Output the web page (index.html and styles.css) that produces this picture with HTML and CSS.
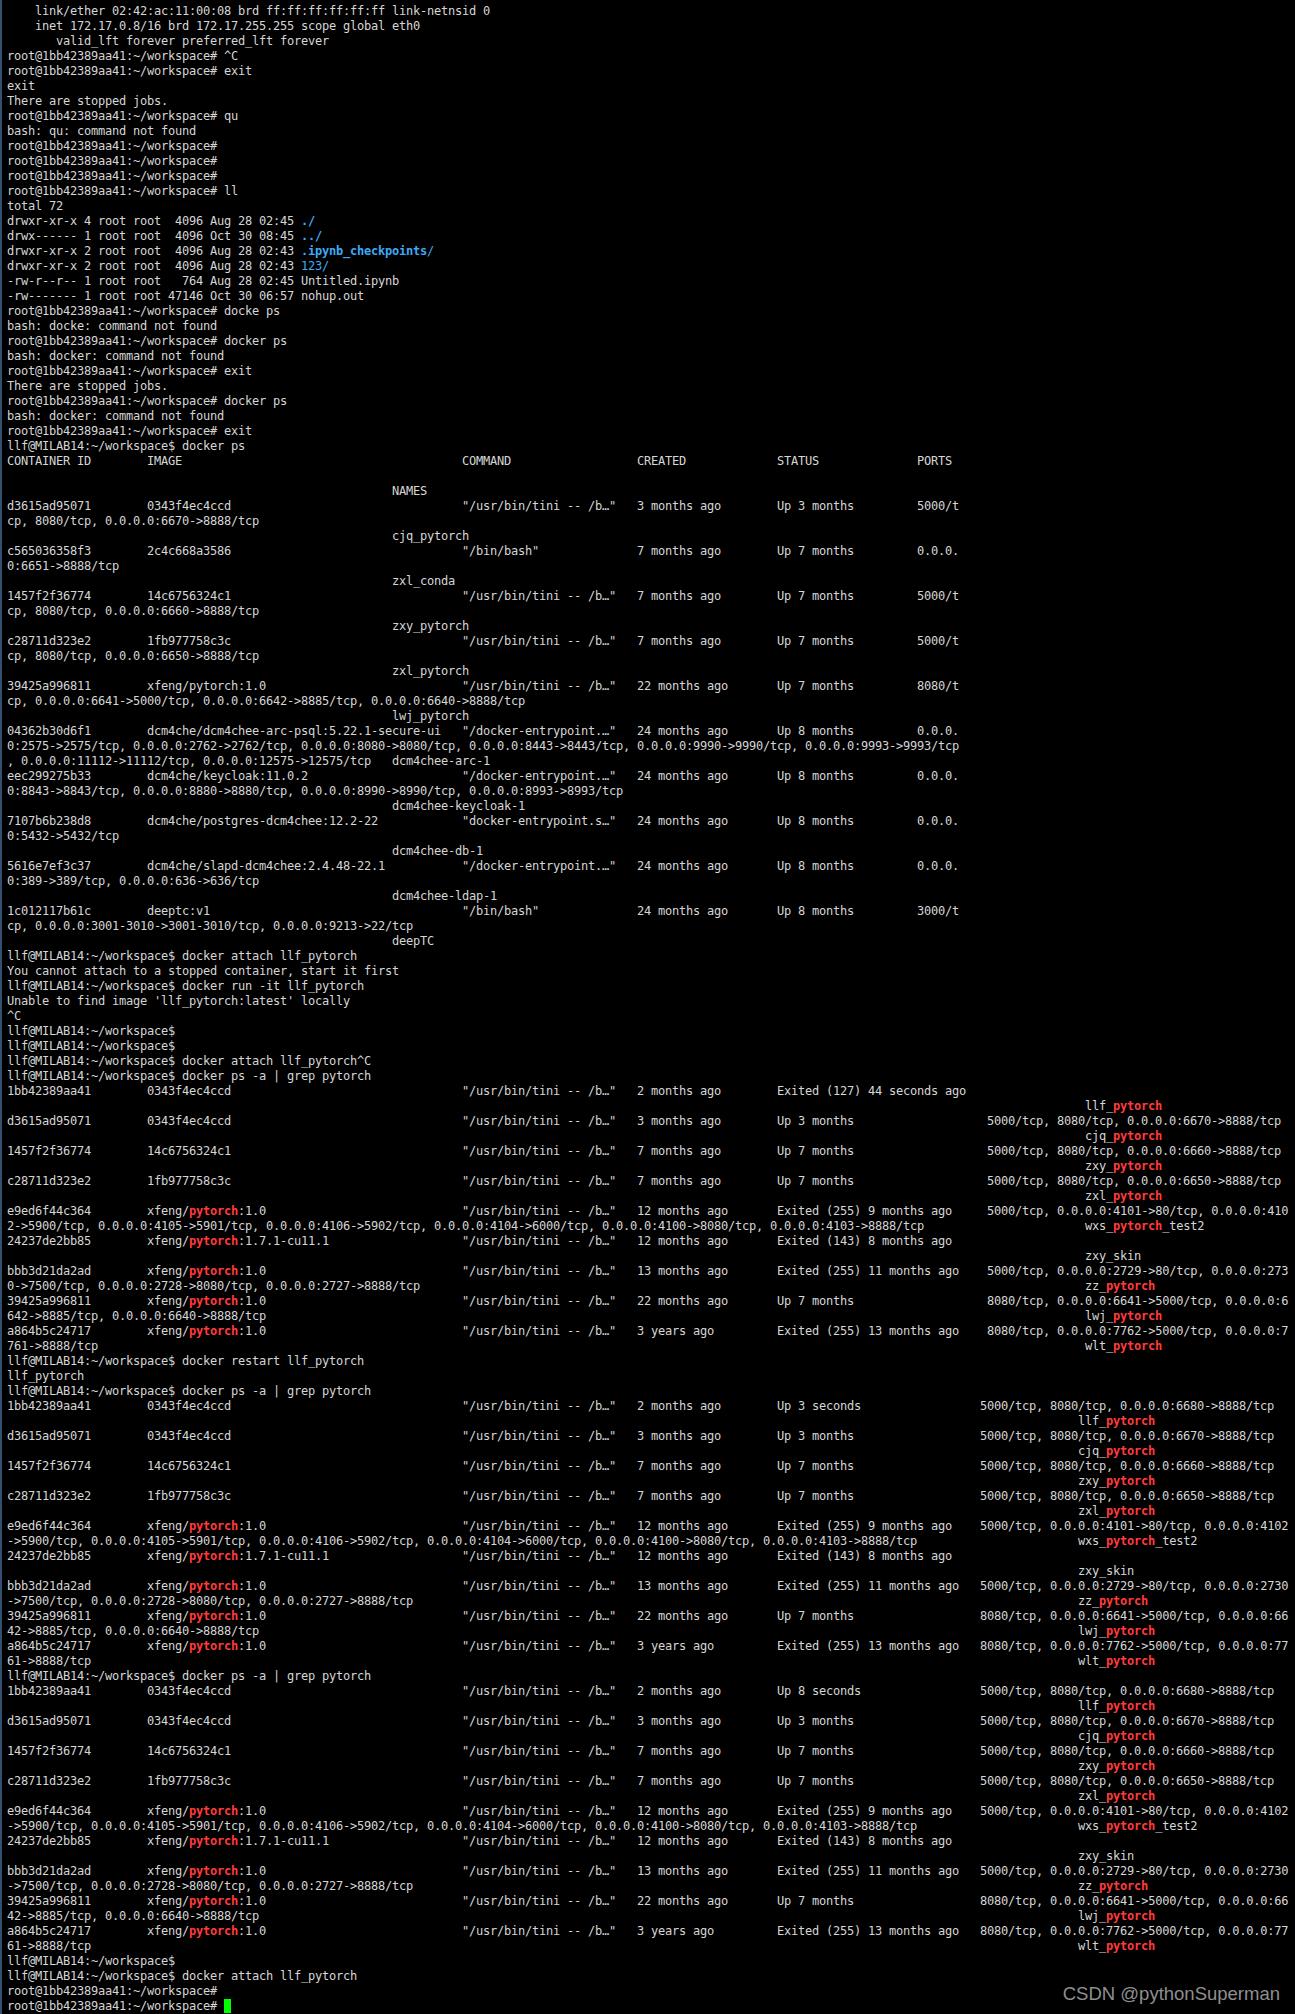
FILE: index.html
```html
<!DOCTYPE html>
<html lang="en">
<head>
<meta charset="utf-8">
<title>Terminal</title>
<link rel="stylesheet" href="styles.css">
</head>
<body>
<main class="terminal">
<pre class="screen">    link/ether 02:42:ac:11:00:08 brd ff:ff:ff:ff:ff:ff link-netnsid 0
    inet 172.17.0.8/16 brd 172.17.255.255 scope global eth0
       valid_lft forever preferred_lft forever
root@1bb42389aa41:~/workspace# ^C
root@1bb42389aa41:~/workspace# exit
exit
There are stopped jobs.
root@1bb42389aa41:~/workspace# qu
bash: qu: command not found
root@1bb42389aa41:~/workspace#
root@1bb42389aa41:~/workspace#
root@1bb42389aa41:~/workspace#
root@1bb42389aa41:~/workspace# ll
total 72
drwxr-xr-x 4 root root  4096 Aug 28 02:45 <b class="dir">./</b>
drwx------ 1 root root  4096 Oct 30 08:45 <b class="dir">../</b>
drwxr-xr-x 2 root root  4096 Aug 28 02:43 <b class="dir">.ipynb_checkpoints</b><span class="dir">/</span>
drwxr-xr-x 2 root root  4096 Aug 28 02:43 <span class="dir">123/</span>
-rw-r--r-- 1 root root   764 Aug 28 02:45 Untitled.ipynb
-rw------- 1 root root 47146 Oct 30 06:57 nohup.out
root@1bb42389aa41:~/workspace# docke ps
bash: docke: command not found
root@1bb42389aa41:~/workspace# docker ps
bash: docker: command not found
root@1bb42389aa41:~/workspace# exit
There are stopped jobs.
root@1bb42389aa41:~/workspace# docker ps
bash: docker: command not found
root@1bb42389aa41:~/workspace# exit
llf@MILAB14:~/workspace$ docker ps
CONTAINER ID        IMAGE                                        COMMAND                  CREATED             STATUS              PORTS

                                                       NAMES
d3615ad95071        0343f4ec4ccd                                 "/usr/bin/tini -- /b…"   3 months ago        Up 3 months         5000/t
cp, 8080/tcp, 0.0.0.0:6670->8888/tcp
                                                       cjq_pytorch
c565036358f3        2c4c668a3586                                 "/bin/bash"              7 months ago        Up 7 months         0.0.0.
0:6651->8888/tcp
                                                       zxl_conda
1457f2f36774        14c6756324c1                                 "/usr/bin/tini -- /b…"   7 months ago        Up 7 months         5000/t
cp, 8080/tcp, 0.0.0.0:6660->8888/tcp
                                                       zxy_pytorch
c28711d323e2        1fb977758c3c                                 "/usr/bin/tini -- /b…"   7 months ago        Up 7 months         5000/t
cp, 8080/tcp, 0.0.0.0:6650->8888/tcp
                                                       zxl_pytorch
39425a996811        xfeng/pytorch:1.0                            "/usr/bin/tini -- /b…"   22 months ago       Up 7 months         8080/t
cp, 0.0.0.0:6641->5000/tcp, 0.0.0.0:6642->8885/tcp, 0.0.0.0:6640->8888/tcp
                                                       lwj_pytorch
04362b30d6f1        dcm4che/dcm4chee-arc-psql:5.22.1-secure-ui   "/docker-entrypoint.…"   24 months ago       Up 8 months         0.0.0.
0:2575->2575/tcp, 0.0.0.0:2762->2762/tcp, 0.0.0.0:8080->8080/tcp, 0.0.0.0:8443->8443/tcp, 0.0.0.0:9990->9990/tcp, 0.0.0.0:9993->9993/tcp
, 0.0.0.0:11112->11112/tcp, 0.0.0.0:12575->12575/tcp   dcm4chee-arc-1
eec299275b33        dcm4che/keycloak:11.0.2                      "/docker-entrypoint.…"   24 months ago       Up 8 months         0.0.0.
0:8843->8843/tcp, 0.0.0.0:8880->8880/tcp, 0.0.0.0:8990->8990/tcp, 0.0.0.0:8993->8993/tcp
                                                       dcm4chee-keycloak-1
7107b6b238d8        dcm4che/postgres-dcm4chee:12.2-22            "docker-entrypoint.s…"   24 months ago       Up 8 months         0.0.0.
0:5432->5432/tcp
                                                       dcm4chee-db-1
5616e7ef3c37        dcm4che/slapd-dcm4chee:2.4.48-22.1           "/docker-entrypoint.…"   24 months ago       Up 8 months         0.0.0.
0:389->389/tcp, 0.0.0.0:636->636/tcp
                                                       dcm4chee-ldap-1
1c012117b61c        deeptc:v1                                    "/bin/bash"              24 months ago       Up 8 months         3000/t
cp, 0.0.0.0:3001-3010->3001-3010/tcp, 0.0.0.0:9213->22/tcp
                                                       deepTC
llf@MILAB14:~/workspace$ docker attach llf_pytorch
You cannot attach to a stopped container, start it first
llf@MILAB14:~/workspace$ docker run -it llf_pytorch
Unable to find image 'llf_pytorch:latest' locally
^C
llf@MILAB14:~/workspace$
llf@MILAB14:~/workspace$
llf@MILAB14:~/workspace$ docker attach llf_pytorch^C
llf@MILAB14:~/workspace$ docker ps -a | grep pytorch
1bb42389aa41        0343f4ec4ccd                                 "/usr/bin/tini -- /b…"   2 months ago        Exited (127) 44 seconds ago
                                                                                                                                                          llf_<b class="hit">pytorch</b>
d3615ad95071        0343f4ec4ccd                                 "/usr/bin/tini -- /b…"   3 months ago        Up 3 months                   5000/tcp, 8080/tcp, 0.0.0.0:6670->8888/tcp
                                                                                                                                                          cjq_<b class="hit">pytorch</b>
1457f2f36774        14c6756324c1                                 "/usr/bin/tini -- /b…"   7 months ago        Up 7 months                   5000/tcp, 8080/tcp, 0.0.0.0:6660->8888/tcp
                                                                                                                                                          zxy_<b class="hit">pytorch</b>
c28711d323e2        1fb977758c3c                                 "/usr/bin/tini -- /b…"   7 months ago        Up 7 months                   5000/tcp, 8080/tcp, 0.0.0.0:6650->8888/tcp
                                                                                                                                                          zxl_<b class="hit">pytorch</b>
e9ed6f44c364        xfeng/<b class="hit">pytorch</b>:1.0                            "/usr/bin/tini -- /b…"   12 months ago       Exited (255) 9 months ago     5000/tcp, 0.0.0.0:4101->80/tcp, 0.0.0.0:410
2->5900/tcp, 0.0.0.0:4105->5901/tcp, 0.0.0.0:4106->5902/tcp, 0.0.0.0:4104->6000/tcp, 0.0.0.0:4100->8080/tcp, 0.0.0.0:4103->8888/tcp                       wxs_<b class="hit">pytorch</b>_test2
24237de2bb85        xfeng/<b class="hit">pytorch</b>:1.7.1-cu11.1                   "/usr/bin/tini -- /b…"   12 months ago       Exited (143) 8 months ago
                                                                                                                                                          zxy_skin
bbb3d21da2ad        xfeng/<b class="hit">pytorch</b>:1.0                            "/usr/bin/tini -- /b…"   13 months ago       Exited (255) 11 months ago    5000/tcp, 0.0.0.0:2729->80/tcp, 0.0.0.0:273
0->7500/tcp, 0.0.0.0:2728->8080/tcp, 0.0.0.0:2727->8888/tcp                                                                                               zz_<b class="hit">pytorch</b>
39425a996811        xfeng/<b class="hit">pytorch</b>:1.0                            "/usr/bin/tini -- /b…"   22 months ago       Up 7 months                   8080/tcp, 0.0.0.0:6641->5000/tcp, 0.0.0.0:6
642->8885/tcp, 0.0.0.0:6640->8888/tcp                                                                                                                     lwj_<b class="hit">pytorch</b>
a864b5c24717        xfeng/<b class="hit">pytorch</b>:1.0                            "/usr/bin/tini -- /b…"   3 years ago         Exited (255) 13 months ago    8080/tcp, 0.0.0.0:7762->5000/tcp, 0.0.0.0:7
761->8888/tcp                                                                                                                                             wlt_<b class="hit">pytorch</b>
llf@MILAB14:~/workspace$ docker restart llf_pytorch
llf_pytorch
llf@MILAB14:~/workspace$ docker ps -a | grep pytorch
1bb42389aa41        0343f4ec4ccd                                 "/usr/bin/tini -- /b…"   2 months ago        Up 3 seconds                 5000/tcp, 8080/tcp, 0.0.0.0:6680->8888/tcp
                                                                                                                                                         llf_<b class="hit">pytorch</b>
d3615ad95071        0343f4ec4ccd                                 "/usr/bin/tini -- /b…"   3 months ago        Up 3 months                  5000/tcp, 8080/tcp, 0.0.0.0:6670->8888/tcp
                                                                                                                                                         cjq_<b class="hit">pytorch</b>
1457f2f36774        14c6756324c1                                 "/usr/bin/tini -- /b…"   7 months ago        Up 7 months                  5000/tcp, 8080/tcp, 0.0.0.0:6660->8888/tcp
                                                                                                                                                         zxy_<b class="hit">pytorch</b>
c28711d323e2        1fb977758c3c                                 "/usr/bin/tini -- /b…"   7 months ago        Up 7 months                  5000/tcp, 8080/tcp, 0.0.0.0:6650->8888/tcp
                                                                                                                                                         zxl_<b class="hit">pytorch</b>
e9ed6f44c364        xfeng/<b class="hit">pytorch</b>:1.0                            "/usr/bin/tini -- /b…"   12 months ago       Exited (255) 9 months ago    5000/tcp, 0.0.0.0:4101->80/tcp, 0.0.0.0:4102
->5900/tcp, 0.0.0.0:4105->5901/tcp, 0.0.0.0:4106->5902/tcp, 0.0.0.0:4104->6000/tcp, 0.0.0.0:4100->8080/tcp, 0.0.0.0:4103->8888/tcp                       wxs_<b class="hit">pytorch</b>_test2
24237de2bb85        xfeng/<b class="hit">pytorch</b>:1.7.1-cu11.1                   "/usr/bin/tini -- /b…"   12 months ago       Exited (143) 8 months ago
                                                                                                                                                         zxy_skin
bbb3d21da2ad        xfeng/<b class="hit">pytorch</b>:1.0                            "/usr/bin/tini -- /b…"   13 months ago       Exited (255) 11 months ago   5000/tcp, 0.0.0.0:2729->80/tcp, 0.0.0.0:2730
->7500/tcp, 0.0.0.0:2728->8080/tcp, 0.0.0.0:2727->8888/tcp                                                                                               zz_<b class="hit">pytorch</b>
39425a996811        xfeng/<b class="hit">pytorch</b>:1.0                            "/usr/bin/tini -- /b…"   22 months ago       Up 7 months                  8080/tcp, 0.0.0.0:6641->5000/tcp, 0.0.0.0:66
42->8885/tcp, 0.0.0.0:6640->8888/tcp                                                                                                                     lwj_<b class="hit">pytorch</b>
a864b5c24717        xfeng/<b class="hit">pytorch</b>:1.0                            "/usr/bin/tini -- /b…"   3 years ago         Exited (255) 13 months ago   8080/tcp, 0.0.0.0:7762->5000/tcp, 0.0.0.0:77
61->8888/tcp                                                                                                                                             wlt_<b class="hit">pytorch</b>
llf@MILAB14:~/workspace$ docker ps -a | grep pytorch
1bb42389aa41        0343f4ec4ccd                                 "/usr/bin/tini -- /b…"   2 months ago        Up 8 seconds                 5000/tcp, 8080/tcp, 0.0.0.0:6680->8888/tcp
                                                                                                                                                         llf_<b class="hit">pytorch</b>
d3615ad95071        0343f4ec4ccd                                 "/usr/bin/tini -- /b…"   3 months ago        Up 3 months                  5000/tcp, 8080/tcp, 0.0.0.0:6670->8888/tcp
                                                                                                                                                         cjq_<b class="hit">pytorch</b>
1457f2f36774        14c6756324c1                                 "/usr/bin/tini -- /b…"   7 months ago        Up 7 months                  5000/tcp, 8080/tcp, 0.0.0.0:6660->8888/tcp
                                                                                                                                                         zxy_<b class="hit">pytorch</b>
c28711d323e2        1fb977758c3c                                 "/usr/bin/tini -- /b…"   7 months ago        Up 7 months                  5000/tcp, 8080/tcp, 0.0.0.0:6650->8888/tcp
                                                                                                                                                         zxl_<b class="hit">pytorch</b>
e9ed6f44c364        xfeng/<b class="hit">pytorch</b>:1.0                            "/usr/bin/tini -- /b…"   12 months ago       Exited (255) 9 months ago    5000/tcp, 0.0.0.0:4101->80/tcp, 0.0.0.0:4102
->5900/tcp, 0.0.0.0:4105->5901/tcp, 0.0.0.0:4106->5902/tcp, 0.0.0.0:4104->6000/tcp, 0.0.0.0:4100->8080/tcp, 0.0.0.0:4103->8888/tcp                       wxs_<b class="hit">pytorch</b>_test2
24237de2bb85        xfeng/<b class="hit">pytorch</b>:1.7.1-cu11.1                   "/usr/bin/tini -- /b…"   12 months ago       Exited (143) 8 months ago
                                                                                                                                                         zxy_skin
bbb3d21da2ad        xfeng/<b class="hit">pytorch</b>:1.0                            "/usr/bin/tini -- /b…"   13 months ago       Exited (255) 11 months ago   5000/tcp, 0.0.0.0:2729->80/tcp, 0.0.0.0:2730
->7500/tcp, 0.0.0.0:2728->8080/tcp, 0.0.0.0:2727->8888/tcp                                                                                               zz_<b class="hit">pytorch</b>
39425a996811        xfeng/<b class="hit">pytorch</b>:1.0                            "/usr/bin/tini -- /b…"   22 months ago       Up 7 months                  8080/tcp, 0.0.0.0:6641->5000/tcp, 0.0.0.0:66
42->8885/tcp, 0.0.0.0:6640->8888/tcp                                                                                                                     lwj_<b class="hit">pytorch</b>
a864b5c24717        xfeng/<b class="hit">pytorch</b>:1.0                            "/usr/bin/tini -- /b…"   3 years ago         Exited (255) 13 months ago   8080/tcp, 0.0.0.0:7762->5000/tcp, 0.0.0.0:77
61->8888/tcp                                                                                                                                             wlt_<b class="hit">pytorch</b>
llf@MILAB14:~/workspace$
llf@MILAB14:~/workspace$ docker attach llf_pytorch
root@1bb42389aa41:~/workspace#
root@1bb42389aa41:~/workspace# <span class="cursor"></span></pre>
<p class="watermark">CSDN @pythonSuperman</p>
</main>
</body>
</html>
```

FILE: styles.css
```css
html, body {
  margin: 0;
  padding: 0;
  background: #000;
}

.terminal {
  position: relative;
  box-sizing: border-box;
  width: 1295px;
  height: 2014px;
  overflow: hidden;
  background: #000;
  border-left: 2px solid #34506e;
}

.screen {
  margin: 0;
  padding: 4px 0 0 5px;
  font-family: "DejaVu Sans Mono", monospace;
  font-size: 12px;
  letter-spacing: -0.224px;
  line-height: 15px;
  color: #d6d6d6;
  white-space: pre;
}

.screen b {
  font-weight: 700;
}

.dir {
  color: #3fa9f5;
}

.hit {
  color: #ff3b3b;
}

.cursor {
  display: inline-block;
  width: 7px;
  height: 14px;
  background: #00ff00;
  vertical-align: -3px;
}

.watermark {
  position: absolute;
  right: 15px;
  bottom: 8px;
  margin: 0;
  font-family: "Liberation Sans", Arial, sans-serif;
  font-size: 18.5px;
  line-height: 24px;
  color: #8f8f8f;
}
```
